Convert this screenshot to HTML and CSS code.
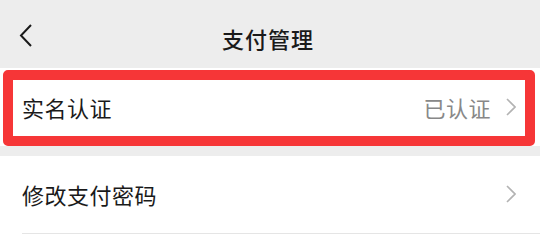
FILE: index.html
```html
<!DOCTYPE html>
<html lang="zh-CN">
<head>
<meta charset="utf-8">
<link rel="stylesheet" href="styles.css">
</head>
<body>
<header class="nav">
  <svg class="back" width="14" height="24" viewBox="0 0 14 24"><polyline points="12,1 2,11.5 12,22" fill="none" stroke="#1a1a1a" stroke-width="2"/></svg>
  <div class="title">支付管理</div>
</header>
<div class="group">
  <div class="row first">
    <span class="label">实名认证</span>
    <span class="value">已认证</span>
    <svg class="arrow" width="10" height="18" viewBox="0 0 10 18"><polyline points="1,1 9,9 1,17" fill="none" stroke="#b3b3b3" stroke-width="1.6"/></svg>
    <div class="mark"></div>
  </div>
</div>
<div class="group second">
  <div class="row divided">
    <span class="label">修改支付密码</span>
    <svg class="arrow" width="10" height="18" viewBox="0 0 10 18"><polyline points="1,1 9,9 1,17" fill="none" stroke="#b3b3b3" stroke-width="1.6"/></svg>
  </div>
</div>
</body>
</html>
```
FILE: styles.css
```css
html, body {
  margin: 0;
  padding: 0;
  background: #ededed;
  font-family: "Noto Sans CJK SC", "Noto Sans", sans-serif;
  color: #1a1a1a;
}
.nav {
  height: 68px;
  position: relative;
  display: flex;
  align-items: center;
  justify-content: center;
}
.back {
  position: absolute;
  left: 19px;
  top: 24px;
}
.title {
  font-size: 22px;
  font-weight: 500;
  letter-spacing: 1px;
  margin-top: 8px;
  margin-right: 4px;
}
.group {
  background: #fff;
}
.second {
  margin-top: 10px;
}
.row {
  position: relative;
  display: flex;
  align-items: center;
  height: 78px;
  padding: 0 22px 0 22px;
}
.divided {
  height: 76px;
  padding-bottom: 4px;
}
.divided::after {
  content: "";
  position: absolute;
  left: 22px;
  right: 0;
  bottom: 2px;
  height: 1px;
  background: #e5e5e5;
}
.label {
  font-size: 22px;
  flex: 1;
  letter-spacing: 0.5px;
}
.value {
  font-size: 22px;
  color: #888;
  margin-right: 15px;
  letter-spacing: 0.5px;
}
.arrow {
  display: block;
  margin-right: 2px;
}
.mark {
  position: absolute;
  left: 3px;
  right: 5px;
  top: 2px;
  bottom: 0;
  border: 10px solid #f63637;
  border-radius: 5px;
}
```
